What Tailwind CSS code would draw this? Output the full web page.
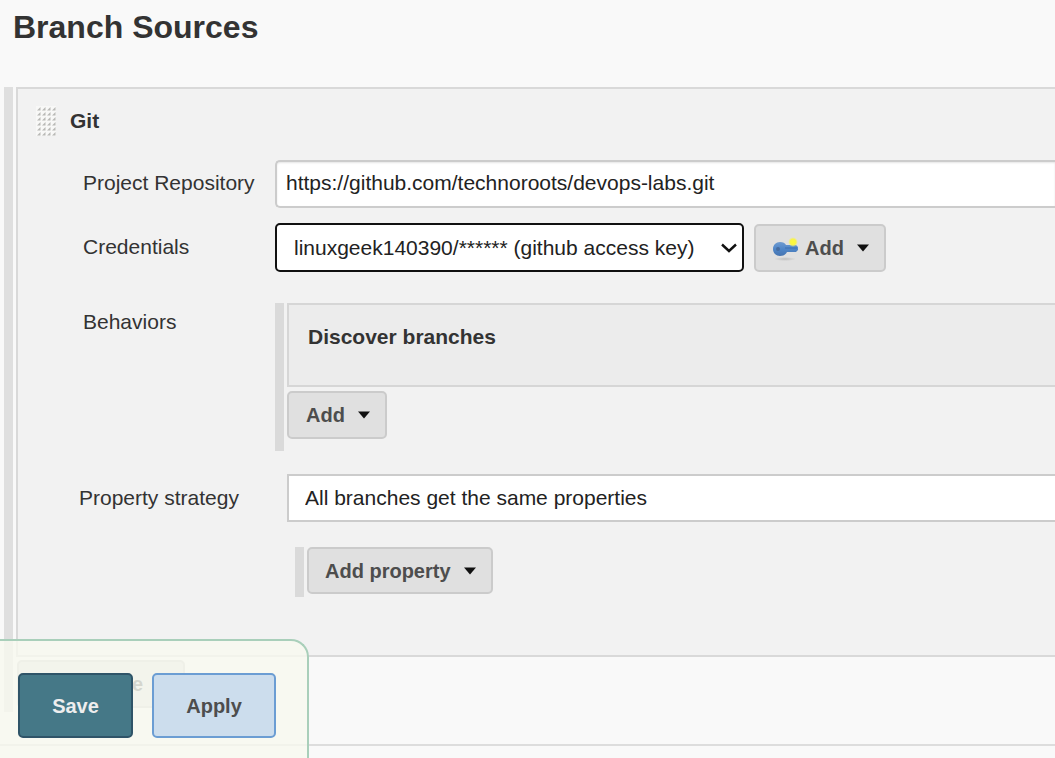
<!DOCTYPE html>
<html lang="en">
<head>
<meta charset="utf-8">
<meta name="viewport" content="width=device-width, initial-scale=1">
<title>Branch Sources</title>
<script src="https://cdn.jsdelivr.net/npm/@tailwindcss/browser@4"></script>
</head>
<body class="min-h-screen overflow-hidden bg-[#f9f9f9] text-[21px] leading-6 text-[#333] [font-family:'Liberation_Sans',Arial,sans-serif]">
<main class="border-b-2 border-[#dddddd] pb-8">
  <h1 class="px-[13px] pt-[7px] text-[32px] leading-10 font-bold">Branch Sources</h1>

  <div class="mt-10 ml-1 flex gap-[3px]">
    <div class="w-[9px] shrink-0 bg-[#dfdfdf]"></div>
    <div class="min-w-0 grow">
      <section class="border-y-2 border-l-2 border-[#d9d9d9] bg-[#f2f2f2] pb-[58px]">
        <div class="flex items-center gap-[14px] pt-[17px] pl-[18px]">
          <svg class="h-[30px] w-5" viewBox="0 0 20 30" aria-hidden="true">
            <defs>
              <pattern id="grip" width="5" height="5" patternUnits="userSpaceOnUse">
                <rect width="5" height="5" fill="#f8f8f7"/>
                <path d="M4.500 1V4.500H1Z" fill="#b9b9b6"/>
              </pattern>
            </defs>
            <rect width="20" height="30" fill="url(#grip)"/>
          </svg>
          <h2 class="font-bold">Git</h2>
        </div>

        <div class="mt-6 flex items-center">
          <label for="repo" class="w-[257px] shrink-0 pb-[2px] pl-[65px]">Project Repository</label>
          <input id="repo" type="text" value="https://github.com/technoroots/devops-labs.git" class="h-12 min-w-0 grow rounded-l-[5px] border-2 border-r-0 border-[#cccccc] bg-white px-[9px] pb-[2px] text-[#222] shadow-[inset_0_1px_2px_#e5e5e5] outline-none">
        </div>

        <div class="mt-[15px] flex items-center">
          <label for="cred" class="w-[257px] shrink-0 pb-[2px] pl-[65px]">Credentials</label>
          <div class="relative w-[469px] shrink-0">
            <select id="cred" class="h-[49px] w-full appearance-none rounded-[5px] border-2 border-[#111] bg-white pl-[17px] text-[#222] outline-none">
              <option>linuxgeek140390/****** (github access key)</option>
            </select>
            <svg class="pointer-events-none absolute top-5 right-[7px] h-[10px] w-4" viewBox="0 0 16 10" fill="none" stroke="#111" stroke-width="2.4" aria-hidden="true"><path d="M1 1.500 8 8l7-6.500"/></svg>
          </div>
          <button type="button" class="ml-[10px] flex h-12 shrink-0 items-center rounded-[5px] border-2 border-[#cbcbcb] bg-[#e0e0e0] pr-[14px] pl-[17px] text-[20px] font-bold text-[#4d4d4d]">
            <svg class="mr-[6px] h-7 w-[26px]" viewBox="0 0 26 28" aria-hidden="true">
              <defs>
                <linearGradient id="key" x2="0" y2="1"><stop stop-color="#6f9bd0"/><stop offset=".5" stop-color="#4f86c8"/><stop offset="1" stop-color="#4674b0"/></linearGradient>
                <radialGradient id="glow"><stop stop-color="#fffb35"/><stop offset=".6" stop-color="#f8f34c"/><stop offset="1" stop-color="#f1ed85" stop-opacity="0"/></radialGradient>
                <radialGradient id="shade"><stop stop-color="#bdbdbd"/><stop offset="1" stop-color="#e0e0e0"/></radialGradient>
              </defs>
              <ellipse cx="12" cy="25" rx="11" ry="2" fill="url(#shade)"/>
              <path fill="url(#key)" d="M7 8c3 0 5 1 6 3h10l2 2v3l-2 2h-9c-1 2-3 4-7 4-4 0-7-3-7-7s3-7 7-7Z"/>
              <circle cx="5" cy="15" r="2" fill="#466c9f"/>
              <path d="M12 14h12" stroke="#3c6fb0"/>
              <circle cx="20" cy="8" r="5" fill="url(#glow)"/>
            </svg>
            Add
            <svg class="ml-3 h-2 w-[14px]" viewBox="0 0 14 8" aria-hidden="true"><path d="M1 .5h12L7 7.500Z" fill="#111"/></svg>
          </button>
        </div>

        <div class="mt-[31px] flex">
          <div class="w-[257px] shrink-0 pt-[7px] pl-[65px]">Behaviors</div>
          <div class="w-[9px] shrink-0 bg-[#dadada]"></div>
          <div class="ml-[3px] min-w-0 grow pb-3">
            <div class="h-[84px] border-y-2 border-l-2 border-[#d6d6d6] bg-[#ececec] pt-5 pl-[19px] font-bold">Discover branches</div>
            <button type="button" class="mt-1 flex h-12 items-center rounded-[5px] border-2 border-[#cbcbcb] bg-[#e0e0e0] pr-[14px] pl-[17px] text-[20px] font-bold text-[#4d4d4d]">
              Add
              <svg class="ml-3 h-2 w-[14px]" viewBox="0 0 14 8" aria-hidden="true"><path d="M1 .5h12L7 7.500Z" fill="#111"/></svg>
            </button>
          </div>
        </div>

        <div class="mt-[23px] flex items-center">
          <label for="strategy" class="w-[269px] shrink-0 pl-[61px]">Property strategy</label>
          <select id="strategy" class="h-12 min-w-0 grow appearance-none border-2 border-r-0 border-[#cccccc] bg-white pl-4 text-[#222] outline-none">
            <option>All branches get the same properties</option>
          </select>
        </div>

        <div class="mt-[25px] ml-[277px] flex gap-[3px]">
          <div class="w-[9px] bg-[#dadada]"></div>
          <button type="button" class="mb-[3px] flex h-[47px] items-center rounded-[5px] border-2 border-[#cbcbcb] bg-[#e0e0e0] pr-[14px] pl-4 text-[20px] font-bold text-[#4d4d4d]">
            Add property
            <svg class="ml-3 h-2 w-[14px]" viewBox="0 0 14 8" aria-hidden="true"><path d="M1 .5h12L7 7.500Z" fill="#111"/></svg>
          </button>
        </div>
      </section>
      <button type="button" class="mt-[3px] mb-1 ml-px flex h-12 items-center rounded-[5px] border-2 border-[#cbcbcb] bg-[#e0e0e0] pr-10 pl-[14px] text-[20px] font-bold text-[#4d4d4d]">Add source</button>
    </div>
  </div>
</main>

<div class="fixed bottom-0 left-0 flex gap-[19px] rounded-tr-[18px] border-t-2 border-r-2 border-[#a9cfba] bg-[#f7f9ef]/80 pt-8 pr-[31px] pb-5 pl-[18px] text-[20px] font-bold">
  <button type="submit" class="h-[65px] w-[115px] rounded-[5px] border-2 border-[#2f5468] bg-[#457887] text-[#eeeeee]">Save</button>
  <button type="button" class="h-[65px] w-[124px] rounded-[5px] border-2 border-[#6b9dd3] bg-[#ccdded] text-[#4d4d4d]">Apply</button>
</div>
</body>
</html>
